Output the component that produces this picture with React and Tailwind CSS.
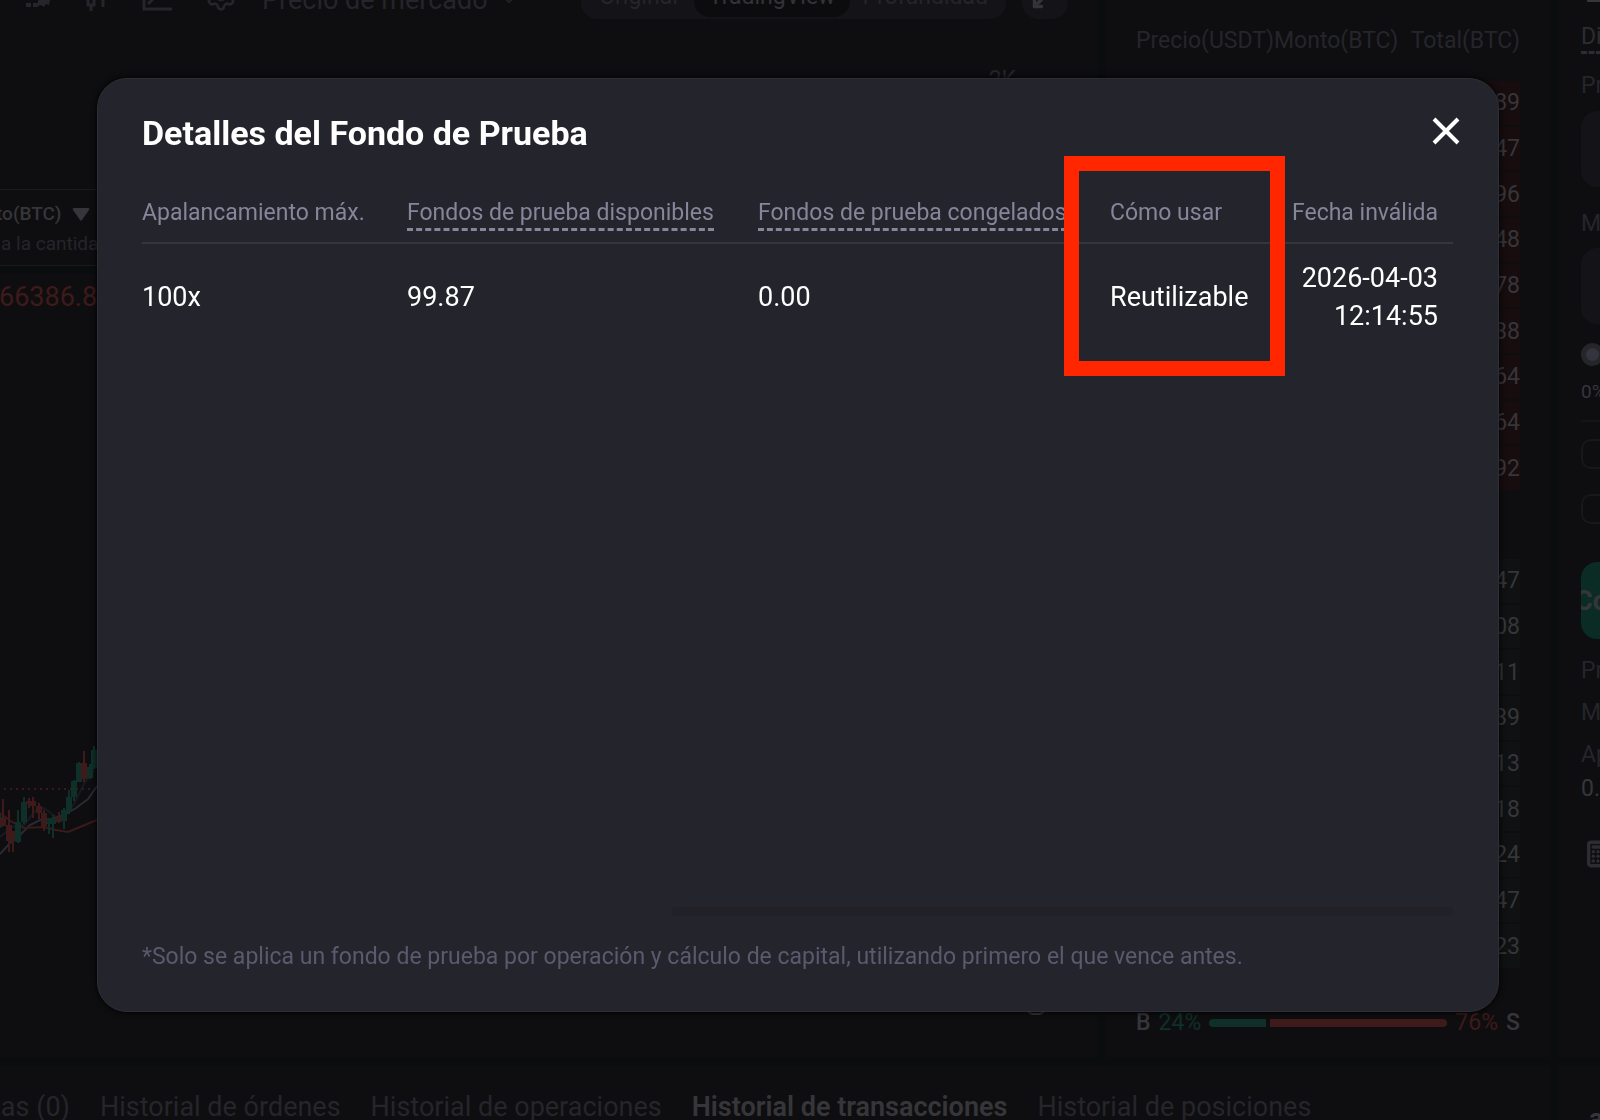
import { Calculator, ChevronDown, Maximize2, Settings } from "lucide-react";

const asks = ["89", "47", "96", "48", "78", "38", "64", "64", "92"];
const bids = ["47", "08", "11", "39", "13", "18", "24", "47", "23"];

const tabs = [
  { name: "tas (0)" },
  { name: "Historial de órdenes" },
  { name: "Historial de operaciones" },
  { name: "Historial de transacciones", active: true },
  { name: "Historial de posiciones" },
];

// x, wick top, wick bottom, body top, body bottom, rising
const candles = [
  [0, 95, 108, 97, 107, true],
  [3, 79, 106, 98, 106, false],
  [9, 90, 132, 105, 121, false],
  [13, 111, 132, 111, 121, false],
  [18, 90, 123, 102, 122, true],
  [24, 77, 104, 82, 102, true],
  [29, 78, 88, 81, 84, false],
  [33, 77, 98, 81, 86, false],
  [39, 83, 99, 86, 93, false],
  [44, 90, 111, 93, 106, false],
  [49, 99, 114, 101, 104, true],
  [53, 95, 118, 98, 104, true],
  [59, 92, 103, 97, 102, false],
  [64, 88, 109, 90, 101, true],
  [69, 70, 94, 77, 92, true],
  [74, 60, 81, 61, 77, true],
  [79, 42, 62, 43, 62, true],
  [84, 31, 62, 43, 59, false],
  [90, 44, 59, 47, 58, true],
  [94, 26, 49, 30, 48, true],
];

function Candles() {
  return (
    <svg className="block" width="97" height="180" viewBox="0 0 97 180" fill="none">
      <path d="M4 69H97" stroke="#3a1a1a" strokeWidth="2" strokeDasharray="2 4" />
      <path d="M0 117L12 107L24 105L36 90L44 88L56 97L64 95L74 84L84 64L94 50" stroke="#191a21" strokeWidth="2" />
      <path d="M0 134L10 123L20 115L30 105L40 100L52 99L64 95L76 88L88 79L97 66" stroke="#2a2b32" strokeWidth="2" />
      <path d="M0 93L12 102L24 108L44 107L56 110L68 112L80 107L97 100" stroke="#3a1a1a" strokeWidth="2" />
      {candles.map(([x, top, bottom, bodyTop, bodyBottom, up]) => (
        <g key={x} fill={up ? "#0f3029" : "#3f1a1a"}>
          <rect x={x - 1} y={top} width="2" height={bottom - top} />
          <rect x={x - 3} y={bodyTop} width="6" height={bodyBottom - bodyTop} />
        </g>
      ))}
    </svg>
  );
}

function Chart() {
  return (
    <section className="flex-1 min-w-0 flex flex-col bg-[#0e0e10] overflow-hidden">
      <div className="h-[19px] shrink-0 flex items-end text-[#25252b]">
        <div className="w-[262px] shrink-0 flex items-end pl-[25px] gap-[33px]">
          <svg width="27" height="19" viewBox="0 0 27 19" fill="currentColor">
            <path d="M1 3h5v4H1zM8 3h5v4H8z" />
            <path d="M13 0h12l-1 5-3-1-2 3-3-2-3 1z" />
          </svg>
          <svg width="24" height="19" viewBox="0 0 24 19" fill="none" stroke="currentColor" strokeWidth="3">
            <path d="M3 0v5h6V0M6 5v6M18 0v7" />
          </svg>
          <svg width="30" height="19" viewBox="0 0 30 19" fill="none" stroke="currentColor" strokeWidth="3">
            <path d="M2 0v9h28M6 4l6-6" />
          </svg>
          <Settings className="w-[32px] h-[32px] mb-[7px]" strokeWidth={2} />
        </div>
        <div className="flex items-center gap-3 text-[27px] leading-8 mb-[3px]">
          Precio de mercado <ChevronDown size={18} />
        </div>
        <div className="ml-auto mr-[30px] flex items-end gap-4">
          <div className="h-[42px] p-[2px] flex items-center rounded-2xl bg-[#131318] text-[23px] leading-[38px]">
            <span className="px-4 pb-[3px]">Original</span>
            <span className="px-[15px] h-[38px] leading-[35px] rounded-2xl bg-[#0c0c0e] text-[#333338]">TradingView</span>
            <span className="pl-3 pr-4 pb-[3px]">Profundidad</span>
          </div>
          <button
            aria-label="Pantalla completa"
            className="w-[46px] h-[42px] pb-1 flex items-center justify-center rounded-2xl bg-[#131318] text-[#333338]"
          >
            <Maximize2 size={28} strokeWidth={3} />
          </button>
        </div>
      </div>
      <div className="h-[170px] shrink-0 pt-[47px] pr-[82px] text-right text-[23px] leading-7 text-[#25252b]">2K</div>
      <div className="border-y border-[#1b1b1e] h-[77px] shrink-0 pt-[11px] overflow-hidden whitespace-nowrap">
        <div className="-ml-[4px] flex items-center gap-[11px] text-[19px] leading-[26px] font-medium text-[#36363a]">
          to(BTC)
          <svg width="18" height="13" viewBox="0 0 18 13" fill="currentColor">
            <path d="M2 0h14q2 0 1 2l-7 10q-1 1-2 0L1 2Q0 0 2 0z" />
          </svg>
        </div>
        <div className="pl-[1px] pt-1 text-[19px] leading-[26px] text-[#25252b]">a la cantida</div>
      </div>
      <div className="h-2 shrink-0 bg-[#0b0c0e]" />
      <div className="pt-[7px] -ml-px text-[27px] leading-8 text-[#3f1a1a]">66386.8</div>
      <div className="mt-auto pb-[97px]">
        <Candles />
      </div>
      <div className="flex justify-end pr-[53px] pb-[42px]">
        <div className="w-[18px] h-[18px] border-2 border-[#36363a] rounded-md" />
      </div>
    </section>
  );
}

function BookRows({ rows, rowClass }) {
  return (
    <div className="h-[409px] shrink-0 flex flex-col gap-[2px]">
      {rows.map((r, i) => (
        <div key={i} className={`flex-1 flex items-center justify-end text-[23px] leading-none ${rowClass}`}>
          {r}
        </div>
      ))}
    </div>
  );
}

function OrderBook() {
  return (
    <section className="w-[444px] shrink-0 flex flex-col bg-[#0e0e10] pl-[30px] pr-[30px] overflow-hidden">
      <div className="h-[81px] shrink-0 flex items-center text-[23px] leading-none text-[#25252b]">
        <span>Precio(USDT)</span>
        <span>Monto(BTC)</span>
        <span className="ml-auto">Total(BTC)</span>
      </div>
      <BookRows rows={asks} rowClass="bg-[#170c0e] text-[#36363a]" />
      <div className="h-[69px] shrink-0" />
      <BookRows rows={bids} rowClass="bg-[#0f1112] text-[#36363a]" />
      <div className="mt-[41px] flex items-center text-[23px] leading-7 text-[#36363a]">
        <span className="font-medium">B</span>
        <span className="ml-2 text-[#0f3029]">24%</span>
        <div className="flex-1 mx-2 flex gap-1">
          <div className="h-2 rounded-l-full bg-[#0f3029]" style={{ width: "24%" }} />
          <div className="h-2 flex-1 rounded-r-full bg-[#3f1a1a]" />
        </div>
        <span className="text-[#3f1a1a]">76%</span>
        <span className="ml-2 font-medium">S</span>
      </div>
    </section>
  );
}

function OrderForm() {
  return (
    <aside className="w-[42px] shrink-0 flex flex-col gap-2 overflow-hidden">
      <div className="flex-1 min-h-0 w-[320px] pl-[23px] bg-[#0e0e10] text-[23px] leading-7 text-[#25252b]">
        <div className="h-[4px] ml-[6px] border-t-2 border-[#36363a]" />
        <div className="pt-[19px]">
          <span className="inline-block border-b-3 border-dashed border-[#2c2c31] text-[#2c2c31]">Di</span>
        </div>
        <label htmlFor="price" className="block mt-[18px]">Pr</label>
        <input id="price" className="block mt-[11px] w-full h-[76px] rounded-2xl bg-[#131318]" />
        <label htmlFor="amount" className="block mt-[23px]">M</label>
        <input id="amount" className="block mt-[10px] w-full h-[76px] rounded-2xl bg-[#131318]" />
        <input
          type="range"
          aria-label="Porcentaje"
          defaultValue="0"
          className="block mt-[19px] w-full h-[23px] appearance-none bg-transparent [&::-webkit-slider-thumb]:appearance-none [&::-webkit-slider-thumb]:w-[23px] [&::-webkit-slider-thumb]:h-[23px] [&::-webkit-slider-thumb]:rounded-full [&::-webkit-slider-thumb]:border-5 [&::-webkit-slider-thumb]:border-[#25252a] [&::-webkit-slider-thumb]:bg-[#34343f]"
        />
        <div className="mt-[12px] text-[19px] text-[#36363a]">0%</div>
        <div className="mt-[14px] border-t-2 border-[#151518]" />
        <input type="checkbox" aria-label="TP/SL" className="appearance-none block mt-[17px] w-[30px] h-[30px] rounded-[10px] border-2 border-[#18181b]" />
        <input type="checkbox" aria-label="Reducir" className="appearance-none block mt-[25px] w-[30px] h-[30px] rounded-[10px] border-2 border-[#18181b]" />
        <button className="block mt-[38px] w-full h-[77px] rounded-2xl bg-[#0a2c25] text-left text-[27px] font-bold text-[#36363a] overflow-hidden">
          <span className="block -ml-[6px]">Co</span>
        </button>
        <div className="mt-[18px]">Pr</div>
        <div className="mt-[14px]">M</div>
        <div className="mt-[14px]">Ap</div>
        <div className="mt-[6px] text-[#36363a]">0.</div>
        <Calculator className="mt-[37px] ml-[3px] w-7 h-7 text-[#2c2c31]" strokeWidth={3} />
      </div>
      <div className="h-[55px] shrink-0 pt-[38px] pl-[31px] bg-[#0e0e10] text-[27px] leading-8 font-bold text-[#36363a] overflow-hidden">
        a
      </div>
    </aside>
  );
}

function FundModal() {
  const th = "p-0 h-[56px] align-top pt-[10px] font-normal text-left whitespace-nowrap";
  return (
    <div className="fixed inset-0 pt-[78px] pb-[108px] pl-[97px] pr-[101px]">
      <div
        role="dialog"
        aria-labelledby="fund-title"
        className="relative h-full flex flex-col pl-[44px] pr-[45px] rounded-[30px] bg-[#24242c] border border-[#2e2e35] shadow-[0_0_6px_#000]"
      >
        <div className="h-[108px] shrink-0 flex items-center justify-between">
          <h2 id="fund-title" className="text-[34px] leading-10 font-bold text-white">Detalles del Fondo de Prueba</h2>
          <button aria-label="Cerrar" className="-mr-[7px] mb-1 text-white">
            <svg width="28" height="28" viewBox="0 0 28 28" stroke="currentColor" strokeWidth="4">
              <path d="M2 2L26 26M26 2L2 26" />
            </svg>
          </button>
        </div>

        <table className="w-full table-fixed border-collapse">
          <colgroup>
            <col className="w-[265px]" />
            <col className="w-[351px]" />
            <col className="w-[352px]" />
            <col className="w-[160px]" />
            <col />
          </colgroup>
          <thead>
            <tr className="border-b-2 border-[#36363a] text-[23px] leading-8 text-[#84869a]">
              <th className={th}>Apalancamiento máx.</th>
              <th className={th}>
                <span className="inline-block border-b-3 border-dashed border-[#84869a] leading-[31px]">Fondos de prueba disponibles</span>
              </th>
              <th className={th}>
                <span className="inline-block border-b-3 border-dashed border-[#84869a] leading-[31px]">Fondos de prueba congelados</span>
              </th>
              <th className={th}>Cómo usar</th>
              <th className={th}>
                <span className="block pr-[15px] text-right">Fecha inválida</span>
              </th>
            </tr>
          </thead>
          <tbody>
            <tr className="text-[27px] leading-[38px] text-white h-[106px]">
              <td>100x</td>
              <td>99.87</td>
              <td>0.00</td>
              <td>Reutilizable</td>
              <td className="pr-[15px] text-right">2026-04-03 12:14:55</td>
            </tr>
          </tbody>
        </table>

        <div className="mt-auto ml-auto w-[781px] h-[9px] rounded-full bg-[#212127]" />
        <p className="mt-[25px] mb-[38px] text-[23px] leading-8 text-[#5a5a6e]">
          *Solo se aplica un fondo de prueba por operación y cálculo de capital, utilizando primero el que vence antes.
        </p>

        {/* highlight around the "Cómo usar" column */}
        <div className="absolute left-[966px] top-[77px] w-[221px] h-[220px] border-[15px] border-[#ff2600]" />
      </div>
    </div>
  );
}

export default function App() {
  return (
    <div className="h-screen flex gap-2 bg-[#0b0c0e] overflow-hidden font-[Roboto,sans-serif]">
      <main className="flex-1 min-w-0 flex flex-col gap-2">
        <div className="flex-1 min-h-0 flex gap-2">
          <Chart />
          <OrderBook />
        </div>
        <nav className="h-[55px] shrink-0 flex items-start gap-[30px] pt-[26px] bg-[#0e0e10] overflow-hidden whitespace-nowrap text-[27px] leading-8">
          {tabs.map((t) => (
            <a
              key={t.name}
              href="#"
              className={t.active ? "font-semibold text-[#36363a]" : "text-[#25252b] first:-ml-[8px]"}
            >
              {t.name}
            </a>
          ))}
        </nav>
      </main>
      <OrderForm />
      <FundModal />
    </div>
  );
}
